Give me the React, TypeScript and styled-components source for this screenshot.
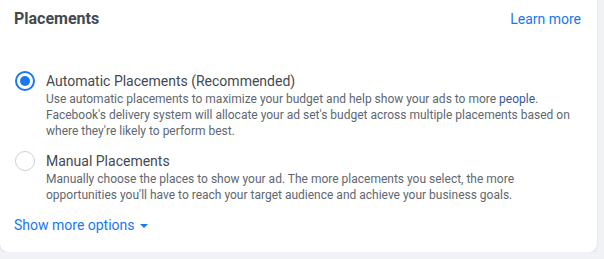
import React, {useState} from "react";
import styled, {createGlobalStyle} from 'styled-components';

const GlobalStyle = createGlobalStyle`
  html, body {
    margin: 0;
    padding: 0;
    background: #f0f2f5;
    font-family: Roboto, "Liberation Sans", Arial, sans-serif;
  }
`;

const Card = styled.div`
  width: 597px;
  box-sizing: border-box;
  background: #fff;
  border-radius: 0 0 8px 8px;
  box-shadow: 0 1px 2px rgba(0, 0, 0, 0.12);
  padding: 5px 16px 17px 14px;
`;

const Header = styled.div`
  display: flex;
  justify-content: space-between;
  align-items: center;
  height: 26px;
  margin-bottom: 41px;
`;

const Title = styled.div`
  font-size: 16px;
  font-weight: 700;
  color: #444950;
`;

const Link = styled.a<{ $dark?: boolean }>`
  color: ${p => (p.$dark ? '#385898' : '#1877f2')};
  text-decoration: none;
  cursor: pointer;
`;

const HeaderLink = styled(Link)`
  font-size: 14px;
  margin-top: 1px;
`;

const OptionList = styled.div`
  display: flex;
  flex-direction: column;
  gap: 13px;
`;

const Option = styled.label`
  display: flex;
  align-items: flex-start;
  gap: 11px;
  cursor: pointer;
`;

const Radio = styled.span<{ $checked: boolean }>`
  flex: none;
  width: 20px;
  height: 20px;
  box-sizing: border-box;
  margin: -1px 0 0 1px;
  border-radius: 50%;
  border: ${p => (p.$checked ? '2px solid #1877f2' : '1px solid #ccd0d5')};
  display: flex;
  align-items: center;
  justify-content: center;
  &::after {
    content: "";
    display: ${p => (p.$checked ? 'block' : 'none')};
    width: 10px;
    height: 10px;
    border-radius: 50%;
    background: #1877f2;
  }
`;

const OptionBody = styled.div`
  display: flex;
  flex-direction: column;
`;

const OptionLabel = styled.div`
  font-size: 14px;
  line-height: 19px;
  color: #444950;
`;

const OptionDesc = styled.div`
  font-size: 12px;
  line-height: 16px;
  color: #606770;
`;

const MoreButton = styled.button`
  display: flex;
  align-items: center;
  gap: 5px;
  margin-top: 12px;
  padding: 0;
  border: none;
  background: none;
  font-family: inherit;
  font-size: 14px;
  line-height: 20px;
  color: #1877f2;
  cursor: pointer;
`;

const Caret = styled.span`
  width: 0;
  height: 0;
  border-left: 4px solid transparent;
  border-right: 4px solid transparent;
  border-top: 4px solid #1877f2;
  margin-top: 2px;
`;

const options = [
  {
    key: 'auto',
    label: 'Automatic Placements (Recommended)',
  },
  {
    key: 'manual',
    label: 'Manual Placements',
  },
];

export default function App() {
  const [selected, setSelected] = useState('auto');

  return (
    <>
      <GlobalStyle/>
      <Card>
        <Header>
          <Title>Placements</Title>
          <HeaderLink>Learn more</HeaderLink>
        </Header>
        <OptionList>
          {options.map(o => (
            <Option key={o.key} onClick={() => setSelected(o.key)}>
              <Radio $checked={selected === o.key}/>
              <OptionBody>
                <OptionLabel>{o.label}</OptionLabel>
                {o.key === 'auto' ? (
                  <OptionDesc>
                    Use automatic placements to maximize your budget and help show your ads to more{' '}
                    <Link $dark>people</Link>. Facebook's delivery system will allocate your ad set's budget
                    across multiple placements based on where they're likely to perform best.
                  </OptionDesc>
                ) : (
                  <OptionDesc>
                    Manually choose the places to show your ad. The more placements you select, the more
                    opportunities you'll have to reach your target audience and achieve your business goals.
                  </OptionDesc>
                )}
              </OptionBody>
            </Option>
          ))}
        </OptionList>
        <MoreButton>
          Show more options <Caret/>
        </MoreButton>
      </Card>
    </>
  );
}
